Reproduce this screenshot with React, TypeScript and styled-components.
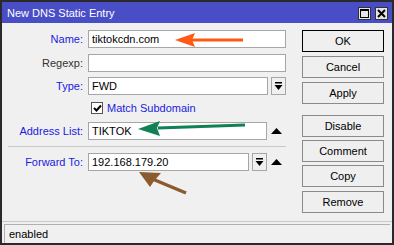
import React from "react";
import styled, { createGlobalStyle } from "styled-components";

const Global = createGlobalStyle`
  html, body { margin: 0; padding: 0; background: #f0f0f0; }
  body { font-family: "Liberation Sans", Arial, sans-serif; font-size: 11px; }
  * { box-sizing: border-box; }
`;

const Window = styled.div`
  position: relative;
  width: 394px;
  height: 245px;
  border: 2px solid #2a2a2a;
  background: #f0f0f0;
  display: flex;
  flex-direction: column;
`;

const TitleBar = styled.div`
  height: 21px;
  background: #4a4ec6;
  color: #fff;
  display: flex;
  align-items: center;
  justify-content: space-between;
  padding: 0 4px 0 5px;
  font-size: 11px;
`;

const TitleButtons = styled.div`
  display: flex;
  gap: 4px;
  margin-top: 2px;
`;

const TitleBtn = styled.div`
  width: 13px;
  height: 13px;
  background: #e4e4e4;
  border: 1px solid #333;
  display: flex;
  align-items: center;
  justify-content: center;
`;

const Main = styled.div`
  display: flex;
  flex: 1;
  padding-top: 7px;
`;

const Form = styled.div`
  width: 284px;
  display: flex;
  flex-direction: column;
`;

const Row = styled.div<{ $mt?: number }>`
  display: grid;
  grid-template-columns: 81px 198px;
  column-gap: 5px;
  align-items: center;
  margin-top: ${(p) => p.$mt ?? 0}px;
`;

const Label = styled.div<{ $plain?: boolean }>`
  text-align: right;
  color: ${(p) => (p.$plain ? "#333" : "#1a1ae0")};
  white-space: nowrap;
`;

const FieldWrap = styled.div`
  display: flex;
  align-items: center;
`;

const Input = styled.div<{ $w?: number }>`
  height: 18px;
  width: ${(p) => (p.$w ? `${p.$w}px` : "100%")};
  background: #fff;
  border: 1px solid #a6a6a6;
  padding-left: 3px;
  line-height: 16px;
  color: #000;
  font-size: 11px;
`;

const DropBtn = styled.div`
  width: 15px;
  height: 18px;
  margin-left: 3px;
  border: 1px solid #a6a6a6;
  background: #f0f0f0;
  display: flex;
  align-items: center;
  justify-content: center;
`;

const UpTri = styled.div`
  width: 19px;
  display: flex;
  justify-content: center;
  align-items: center;
`;

const CheckRow = styled.div`
  display: flex;
  align-items: center;
  gap: 4px;
  margin-left: 89px;
  margin-top: 6px;
  height: 14px;
  color: #1a1ae0;
  font-size: 11px;
`;

const CheckBox = styled.div`
  width: 12px;
  height: 12px;
  border: 1px solid #555;
  background: #fff;
  display: flex;
  align-items: center;
  justify-content: center;
`;

const Separator = styled.div`
  height: 1px;
  background: #c8c8c8;
  margin: 6px 0 0 6px;
  width: 278px;
`;

const Buttons = styled.div`
  display: flex;
  flex-direction: column;
  margin-left: 16px;
`;

const Button = styled.div<{ $mt?: number; $focus?: boolean }>`
  width: 82px;
  height: 22px;
  margin-top: ${(p) => p.$mt ?? 0}px;
  border: 1px solid ${(p) => (p.$focus ? "#000" : "#8a8a8a")};
  background: #efefef;
  display: flex;
  align-items: center;
  justify-content: center;
  color: #000;
  font-size: 11px;
`;

const StatusBar = styled.div`
  border-top: 1px solid #c8c8c8;
  margin-top: auto;
  padding: 2px 2px 0 2px;
  height: 22px;
`;

const StatusBox = styled.div`
  height: 19px;
  border: 1px solid #b0b0b0;
  border-right: none;
  border-bottom: none;
  padding-left: 4px;
  line-height: 18px;
  color: #000;
`;

const Overlay = styled.svg`
  position: absolute;
  left: -2px;
  top: -2px;
  pointer-events: none;
`;

const DownArrowIcon = () => (
  <svg width="9" height="9" viewBox="0 0 9 9">
    <rect x="1" y="0" width="7" height="1.5" fill="#000" />
    <polygon points="0.5,3 8.5,3 4.5,8" fill="#000" />
  </svg>
);

const UpTriIcon = () => (
  <svg width="11" height="6" viewBox="0 0 11 6">
    <polygon points="5.5,0 11,6 0,6" fill="#000" />
  </svg>
);

export default function App() {
  return (
    <>
      <Global />
      <Window>
        <TitleBar>
          <span>New DNS Static Entry</span>
          <TitleButtons>
            <TitleBtn>
              <svg width="9" height="9" viewBox="0 0 9 9">
                <rect x="0.5" y="0.5" width="8" height="8" fill="none" stroke="#000" />
                <rect x="0.5" y="0.5" width="8" height="1.5" fill="#000" />
              </svg>
            </TitleBtn>
            <TitleBtn>
              <svg width="9" height="9" viewBox="0 0 9 9">
                <path d="M1 1 L8 8 M8 1 L1 8" stroke="#000" strokeWidth="2" />
              </svg>
            </TitleBtn>
          </TitleButtons>
        </TitleBar>
        <Main>
          <Form>
            <Row>
              <Label>Name:</Label>
              <Input>tiktokcdn.com</Input>
            </Row>
            <Row $mt={6}>
              <Label $plain>Regexp:</Label>
              <Input />
            </Row>
            <Row $mt={5}>
              <Label>Type:</Label>
              <FieldWrap>
                <Input $w={180}>FWD</Input>
                <DropBtn>
                  <DownArrowIcon />
                </DropBtn>
              </FieldWrap>
            </Row>
            <CheckRow>
              <CheckBox>
                <svg width="9" height="8" viewBox="0 0 9 8">
                  <path d="M1 4 L3.5 6.5 L8 1.5" stroke="#000" strokeWidth="2" fill="none" />
                </svg>
              </CheckBox>
              <span>Match Subdomain</span>
            </CheckRow>
            <Row $mt={7}>
              <Label>Address List:</Label>
              <FieldWrap>
                <Input $w={179}>TIKTOK</Input>
                <UpTri>
                  <UpTriIcon />
                </UpTri>
              </FieldWrap>
            </Row>
            <Separator />
            <Row $mt={6}>
              <Label>Forward To:</Label>
              <FieldWrap>
                <Input $w={162}>192.168.179.20</Input>
                <DropBtn>
                  <DownArrowIcon />
                </DropBtn>
                <UpTri>
                  <UpTriIcon />
                </UpTri>
              </FieldWrap>
            </Row>
          </Form>
          <Buttons>
            <Button $focus>OK</Button>
            <Button $mt={4}>Cancel</Button>
            <Button $mt={4}>Apply</Button>
            <Button $mt={11}>Disable</Button>
            <Button $mt={3}>Comment</Button>
            <Button $mt={3}>Copy</Button>
            <Button $mt={4}>Remove</Button>
          </Buttons>
        </Main>
        <StatusBar>
          <StatusBox>enabled</StatusBox>
        </StatusBar>
        <Overlay width="394" height="245" viewBox="0 0 394 245">
          <line x1="190" y1="40" x2="243" y2="40" stroke="#ff5a14" strokeWidth="3" />
          <polygon points="175,40 195,33 192,40 195,47" fill="#ff5a14" />
          <line x1="158" y1="128" x2="245" y2="125" stroke="#118055" strokeWidth="3" />
          <polygon points="138,129 160,121 157,128 160,136" fill="#118055" />
          <line x1="150" y1="178" x2="186" y2="193" stroke="#8b5a2e" strokeWidth="3.5" />
          <polygon points="139,172 161,173 154,181 150,187" fill="#8b5a2e" />
        </Overlay>
      </Window>
    </>
  );
}
